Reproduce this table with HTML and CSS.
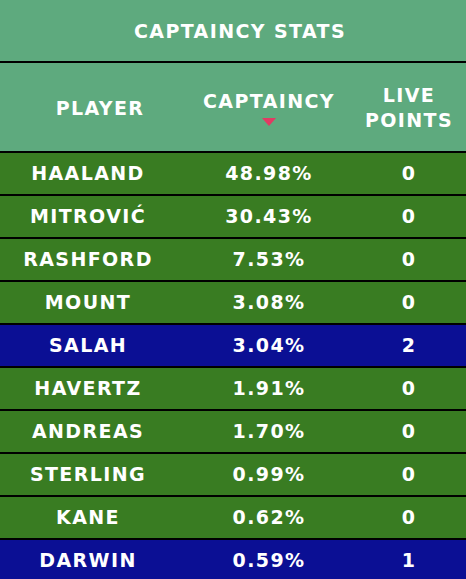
FILE: index.html
```html
<!DOCTYPE html>
<html>
<head>
<meta charset="utf-8">
<link rel="stylesheet" href="styles.css">
</head>
<body>
<div class="stats">
  <div class="title">CAPTAINCY STATS</div>
  <div class="head">
    <div class="cell c1">PLAYER</div>
    <div class="cell c2"><span>CAPTAINCY</span><span class="sort"></span></div>
    <div class="cell c3">LIVE<br>POINTS</div>
  </div>
  <div class="row green"><div class="cell c1">HAALAND</div><div class="cell c2">48.98%</div><div class="cell c3">0</div></div>
  <div class="row green"><div class="cell c1">MITROVIĆ</div><div class="cell c2">30.43%</div><div class="cell c3">0</div></div>
  <div class="row green"><div class="cell c1">RASHFORD</div><div class="cell c2">7.53%</div><div class="cell c3">0</div></div>
  <div class="row green"><div class="cell c1">MOUNT</div><div class="cell c2">3.08%</div><div class="cell c3">0</div></div>
  <div class="row blue"><div class="cell c1">SALAH</div><div class="cell c2">3.04%</div><div class="cell c3">2</div></div>
  <div class="row green"><div class="cell c1">HAVERTZ</div><div class="cell c2">1.91%</div><div class="cell c3">0</div></div>
  <div class="row green"><div class="cell c1">ANDREAS</div><div class="cell c2">1.70%</div><div class="cell c3">0</div></div>
  <div class="row green"><div class="cell c1">STERLING</div><div class="cell c2">0.99%</div><div class="cell c3">0</div></div>
  <div class="row green"><div class="cell c1">KANE</div><div class="cell c2">0.62%</div><div class="cell c3">0</div></div>
  <div class="row blue"><div class="cell c1">DARWIN</div><div class="cell c2">0.59%</div><div class="cell c3">1</div></div>
</div>
</body>
</html>
```
FILE: styles.css
```css
html, body {
  margin: 0;
  padding: 0;
  overflow: hidden;
  background: #0b0f94;
}
.stats {
  width: 480px;
  font-family: "DejaVu Sans", sans-serif;
  font-weight: bold;
  font-size: 19px;
  letter-spacing: 1.4px;
  color: #fff;
}
.title {
  height: 61px;
  background: #5eaa7e;
  display: flex;
  align-items: center;
  justify-content: center;
  border-bottom: 2px solid #000;
}
.head {
  display: grid;
  grid-template-columns: 200px 138px 142px;
  height: 88px;
  background: #5eaa7e;
  border-bottom: 2px solid #000;
}
.row {
  display: grid;
  grid-template-columns: 200px 138px 142px;
  height: 41px;
  border-bottom: 2px solid #000;
}
.green { background: #397c22; }
.blue { background: #0b0f94; }
.cell {
  display: flex;
  align-items: center;
  justify-content: center;
  text-align: center;
}
.row .cell { padding-bottom: 2px; }
.row .c1 { padding-right: 24px; }
.head .c1 { padding-top: 2px; }
.head .c2 {
  flex-direction: column;
  padding-top: 1px;
}
.head .c3 {
  line-height: 25px;
  padding-top: 1px;
}
.sort {
  width: 0;
  height: 0;
  margin-top: 6px;
  border-left: 7px solid transparent;
  border-right: 7px solid transparent;
  border-top: 8px solid #e23a63;
}
```
